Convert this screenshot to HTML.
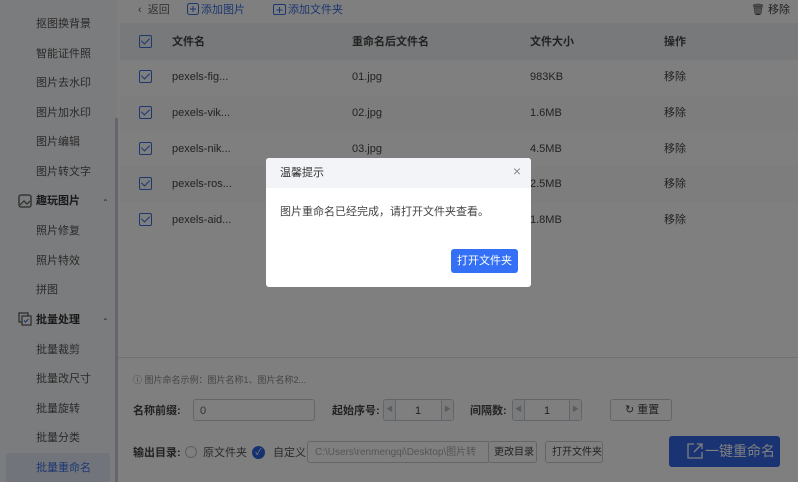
<!DOCTYPE html>
<html><head><meta charset="utf-8"><style>
*{margin:0;padding:0;box-sizing:border-box}
body{width:798px;height:482px;overflow:hidden;position:relative;background:#fff;font-family:"Liberation Sans","Noto Sans CJK SC",sans-serif;font-size:11px;color:#333;line-height:14px}
.abs{position:absolute}
.side{left:0;top:0;width:117px;height:482px;background:#f7f8fa}
.si{position:absolute;left:36px;font-size:11px;color:#555;line-height:14px}
.sh{position:absolute;left:36px;font-size:11px;font-weight:bold;color:#333;line-height:14px}
.cb{position:absolute;width:13px;height:13px;border:1.5px solid #3b6fe0;border-radius:2px}
.cb:after{content:"";position:absolute;left:3px;top:0px;width:4px;height:7px;border:solid #3b6fe0;border-width:0 1.5px 1.5px 0;transform:rotate(45deg)}
.row{position:absolute;left:120px;right:0;height:36px}
.t{position:absolute;font-size:11px;color:#444;line-height:14px;white-space:nowrap}
.box{position:absolute;border:1px solid #c8cbd1;border-radius:3px;background:#fff}
.ov{left:0;top:0;width:798px;height:482px;background:rgba(0,0,0,0.5)}
.ar{position:absolute;top:0;width:12px;height:20px;background:#f5f6f8;color:#bbb;font-size:7px;text-align:center;line-height:20px}
</style></head><body>
<div class="abs side">
<div class="abs" style="left:115px;top:118px;width:3px;height:364px;background:#c9ccd2"></div>
<div class="si" style="top:17px">抠图换背景</div>
<div class="si" style="top:47px">智能证件照</div>
<div class="si" style="top:76px">图片去水印</div>
<div class="si" style="top:106px">图片加水印</div>
<div class="si" style="top:135px">图片编辑</div>
<div class="si" style="top:165px">图片转文字</div>
<svg class="abs" style="left:18px;top:194px" width="14" height="14"><rect x="1" y="1" width="12" height="12" rx="2" fill="none" stroke="#555" stroke-width="1.3"/><path d="M2 11l4-4 3 3 3-3" fill="none" stroke="#555" stroke-width="1.2"/></svg>
<div class="sh" style="top:194px">趣玩图片</div><div class="abs" style="left:102px;top:196px;font-size:8px;color:#555">⌃</div>
<div class="si" style="top:224px">照片修复</div>
<div class="si" style="top:254px">照片特效</div>
<div class="si" style="top:283px">拼图</div>
<svg class="abs" style="left:18px;top:312px" width="14" height="14"><rect x="1" y="1" width="9" height="9" fill="none" stroke="#555" stroke-width="1.2"/><rect x="4" y="4" width="9" height="9" fill="#fff" stroke="#555" stroke-width="1.2"/><path d="M6 8.5l1.5 1.5 3-3" fill="none" stroke="#3b6fe0" stroke-width="1.2"/></svg>
<div class="sh" style="top:313px">批量处理</div><div class="abs" style="left:102px;top:315px;font-size:8px;color:#555">⌃</div>
<div class="si" style="top:343px">批量裁剪</div>
<div class="si" style="top:372px">批量改尺寸</div>
<div class="si" style="top:402px">批量旋转</div>
<div class="si" style="top:431px">批量分类</div>
<div class="abs" style="left:6px;top:453px;width:104px;height:29px;background:#e3e9f7;border-radius:3px"></div>
<div class="si" style="top:461px;color:#3b6fe0">批量重命名</div>
</div>
<!-- toolbar -->
<div class="t" style="left:138px;top:3px;color:#666">‹&nbsp; 返回</div>
<svg class="abs" style="left:187px;top:3px" width="12" height="12"><rect x="0.5" y="0.5" width="11" height="11" rx="2" fill="none" stroke="#3b6fe0"/><path d="M6 3v6M3 6h6" stroke="#3b6fe0"/></svg>
<div class="t" style="left:201px;top:3px;color:#3b6fe0">添加图片</div>
<svg class="abs" style="left:273px;top:4px" width="13" height="11"><rect x="0.5" y="0.5" width="12" height="10" rx="1.5" fill="none" stroke="#3b6fe0"/><path d="M6.5 3v6M3.5 6h6" stroke="#3b6fe0"/></svg>
<div class="t" style="left:288px;top:3px;color:#3b6fe0">添加文件夹</div>
<div class="t" style="left:751px;top:3px">🗑 移除</div>
<!-- table -->
<div class="row" style="top:23px;height:37px;background:#f0f2f5"></div>
<div class="cb" style="left:139px;top:35px"></div>
<div class="t" style="left:172px;top:35px;font-weight:bold">文件名</div>
<div class="t" style="left:352px;top:35px;font-weight:bold">重命名后文件名</div>
<div class="t" style="left:530px;top:35px;font-weight:bold">文件大小</div>
<div class="t" style="left:664px;top:35px;font-weight:bold">操作</div>
<div class="row" style="top:96px;background:#fafbfc"></div>
<div class="row" style="top:166px;background:#fafbfc"></div>
<div class="cb" style="left:139px;top:70px"></div><div class="t" style="left:172px;top:70px">pexels-fig...</div><div class="t" style="left:352px;top:70px">01.jpg</div><div class="t" style="left:530px;top:70px">983KB</div><div class="t" style="left:664px;top:70px">移除</div>
<div class="cb" style="left:139px;top:106px"></div><div class="t" style="left:172px;top:106px">pexels-vik...</div><div class="t" style="left:352px;top:106px">02.jpg</div><div class="t" style="left:530px;top:106px">1.6MB</div><div class="t" style="left:664px;top:106px">移除</div>
<div class="cb" style="left:139px;top:142px"></div><div class="t" style="left:172px;top:142px">pexels-nik...</div><div class="t" style="left:352px;top:142px">03.jpg</div><div class="t" style="left:530px;top:142px">4.5MB</div><div class="t" style="left:664px;top:142px">移除</div>
<div class="cb" style="left:139px;top:177px"></div><div class="t" style="left:172px;top:177px">pexels-ros...</div><div class="t" style="left:530px;top:177px">2.5MB</div><div class="t" style="left:664px;top:177px">移除</div>
<div class="cb" style="left:139px;top:213px"></div><div class="t" style="left:172px;top:213px">pexels-aid...</div><div class="t" style="left:530px;top:213px">1.8MB</div><div class="t" style="left:664px;top:213px">移除</div>
<!-- bottom -->
<div class="abs" style="left:118px;top:357px;width:680px;height:1px;background:#dde1e8"></div>
<div class="t" style="left:133px;top:373px;font-size:9px;color:#888">ⓘ 图片命名示例：图片名称1、图片名称2...</div>
<div class="t" style="left:133px;top:404px;font-weight:bold">名称前缀:</div>
<div class="box" style="left:193px;top:399px;width:122px;height:22px"></div><div class="t" style="left:200px;top:404px;color:#666">0</div>
<div class="t" style="left:332px;top:404px;font-weight:bold">起始序号:</div>
<div class="box" style="left:383px;top:399px;width:71px;height:22px;overflow:hidden"><div class="ar" style="left:0;border-right:1px solid #c8cbd1">◀</div><div class="ar" style="right:0;border-left:1px solid #c8cbd1">▶</div></div><div class="t" style="left:415px;top:404px">1</div>
<div class="t" style="left:470px;top:404px;font-weight:bold">间隔数:</div>
<div class="box" style="left:512px;top:399px;width:70px;height:22px;overflow:hidden"><div class="ar" style="left:0;border-right:1px solid #c8cbd1">◀</div><div class="ar" style="right:0;border-left:1px solid #c8cbd1">▶</div></div><div class="t" style="left:544px;top:404px">1</div>
<div class="box" style="left:610px;top:399px;width:62px;height:22px"></div><div class="t" style="left:625px;top:403px">↻ 重置</div>
<div class="t" style="left:133px;top:446px;font-weight:bold">输出目录:</div>
<div class="abs" style="left:185px;top:446px;width:12px;height:12px;border:1px solid #bbb;border-radius:50%"></div>
<div class="t" style="left:203px;top:446px;color:#555">原文件夹</div>
<div class="abs" style="left:252px;top:446px;width:13px;height:13px;background:#2e63e0;border-radius:50%;color:#fff;font-size:9px;text-align:center;line-height:13px">✓</div>
<div class="t" style="left:273px;top:446px;color:#555">自定义</div>
<div class="box" style="left:307px;top:441px;width:183px;height:22px"></div><div class="t" style="left:315px;top:446px;color:#aaa;font-size:10px">C:\Users\renmengqi\Desktop\图片转</div>
<div class="box" style="left:488px;top:441px;width:49px;height:22px"></div><div class="t" style="left:494px;top:446px;font-size:10px">更改目录</div>
<div class="box" style="left:545px;top:441px;width:58px;height:22px"></div><div class="t" style="left:552px;top:446px;font-size:10px">打开文件夹</div>
<div class="abs" style="left:669px;top:436px;width:111px;height:31px;background:#3366e6;border-radius:3px;color:#fff;font-size:14px;line-height:31px;padding-left:36px">一键重命名</div>
<svg class="abs" style="left:687px;top:443px" width="16" height="16"><path d="M7 1H1v14h14V9M10 1h5v5M15 1L7 9" fill="none" stroke="#fff" stroke-width="1.3"/></svg>
<!-- overlay -->
<div class="abs ov"></div>
<div class="abs" style="left:266px;top:158px;width:265px;height:129px;background:#fff;border-radius:3px;overflow:hidden">
<div style="height:30px;background:#f3f4f7;padding:8px 0 0 14px;font-size:11px;color:#333">温馨提示</div>
<div class="abs" style="right:10px;top:6px;font-size:14px;color:#888">×</div>
<div class="abs" style="left:14px;top:47px;font-size:11px;color:#444">图片重命名已经完成，请打开文件夹查看。</div>
<div class="abs" style="left:185px;top:91px;width:67px;height:24px;background:#3370f5;border-radius:3px;color:#fff;font-size:11px;text-align:center;line-height:24px">打开文件夹</div>
</div>
</body></html>
